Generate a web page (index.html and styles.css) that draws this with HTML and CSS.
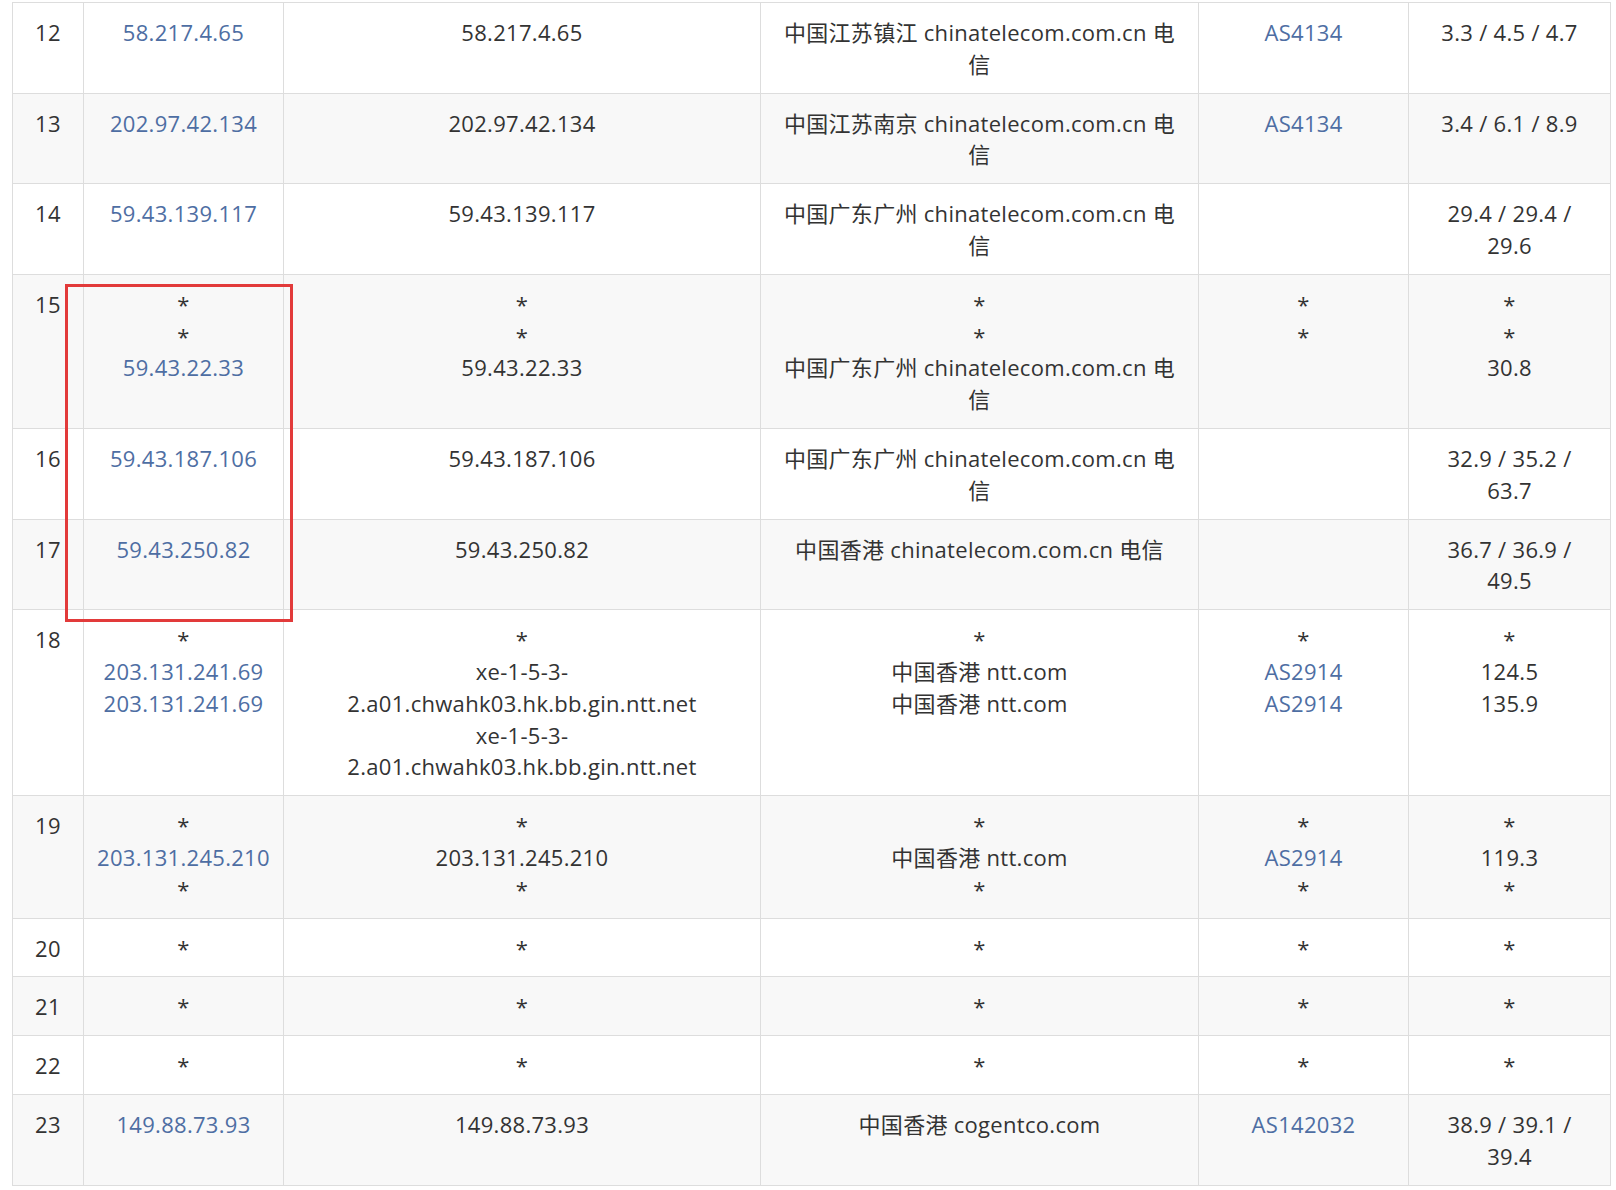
FILE: index.html
```html
<!DOCTYPE html>
<html lang="zh-CN">
<head>
<meta charset="utf-8">
<title>Traceroute</title>
<link rel="stylesheet" href="styles.css">
</head>
<body>
<div class="wrap">
<table class="trace">
<colgroup>
<col class="c-hop"><col class="c-ip"><col class="c-host"><col class="c-loc"><col class="c-asn"><col class="c-rtt">
</colgroup>
<tbody>
<tr><td>12</td><td><a>58.217.4.65</a></td><td class="host">58.217.4.65</td><td class="loc">中国江苏镇江 chinatelecom.com.cn 电信</td><td><a>AS4134</a></td><td class="rtt">3.3 / 4.5 / 4.7</td></tr>
<tr><td>13</td><td><a>202.97.42.134</a></td><td class="host">202.97.42.134</td><td class="loc">中国江苏南京 chinatelecom.com.cn 电信</td><td><a>AS4134</a></td><td class="rtt">3.4 / 6.1 / 8.9</td></tr>
<tr><td>14</td><td><a>59.43.139.117</a></td><td class="host">59.43.139.117</td><td class="loc">中国广东广州 chinatelecom.com.cn 电信</td><td></td><td class="rtt">29.4 / 29.4 / 29.6</td></tr>
<tr><td>15</td><td><div>*</div><div>*</div><div><a>59.43.22.33</a></div></td><td class="host"><div>*</div><div>*</div><div>59.43.22.33</div></td><td class="loc"><div>*</div><div>*</div><div>中国广东广州 chinatelecom.com.cn 电信</div></td><td><div>*</div><div>*</div></td><td class="rtt"><div>*</div><div>*</div><div>30.8</div></td></tr>
<tr><td>16</td><td><a>59.43.187.106</a></td><td class="host">59.43.187.106</td><td class="loc">中国广东广州 chinatelecom.com.cn 电信</td><td></td><td class="rtt">32.9 / 35.2 / 63.7</td></tr>
<tr><td>17</td><td><a>59.43.250.82</a></td><td class="host">59.43.250.82</td><td class="loc">中国香港 chinatelecom.com.cn 电信</td><td></td><td class="rtt">36.7 / 36.9 / 49.5</td></tr>
<tr><td>18</td><td><div>*</div><div><a>203.131.241.69</a></div><div><a>203.131.241.69</a></div></td><td class="host"><div>*</div><div>xe-1-5-3-2.a01.chwahk03.hk.bb.gin.ntt.net</div><div>xe-1-5-3-2.a01.chwahk03.hk.bb.gin.ntt.net</div></td><td class="loc"><div>*</div><div>中国香港 ntt.com</div><div>中国香港 ntt.com</div></td><td><div>*</div><div><a>AS2914</a></div><div><a>AS2914</a></div></td><td class="rtt"><div>*</div><div>124.5</div><div>135.9</div></td></tr>
<tr><td>19</td><td><div>*</div><div><a>203.131.245.210</a></div><div>*</div></td><td class="host"><div>*</div><div>203.131.245.210</div><div>*</div></td><td class="loc"><div>*</div><div>中国香港 ntt.com</div><div>*</div></td><td><div>*</div><div><a>AS2914</a></div><div>*</div></td><td class="rtt"><div>*</div><div>119.3</div><div>*</div></td></tr>
<tr><td>20</td><td>*</td><td class="host">*</td><td class="loc">*</td><td>*</td><td class="rtt">*</td></tr>
<tr><td>21</td><td>*</td><td class="host">*</td><td class="loc">*</td><td>*</td><td class="rtt">*</td></tr>
<tr><td>22</td><td>*</td><td class="host">*</td><td class="loc">*</td><td>*</td><td class="rtt">*</td></tr>
<tr><td>23</td><td><a>149.88.73.93</a></td><td class="host">149.88.73.93</td><td class="loc">中国香港 cogentco.com</td><td><a>AS142032</a></td><td class="rtt">38.9 / 39.1 / 39.4</td></tr>
</tbody>
</table>
<div class="mark"></div>
</div>
</body>
</html>
```

FILE: styles.css
```css
html, body {
  margin: 0;
  padding: 0;
  background: #ffffff;
}

body {
  font-family: "Open Sans", "Noto Sans CJK SC", sans-serif;
  font-size: 22px;
  letter-spacing: 0.3px;
  color: #333333;
}

.wrap {
  position: relative;
  padding: 2px 0 0 12px;
}

.trace {
  border-collapse: collapse;
  table-layout: fixed;
  width: 1599px;
}

.c-hop { width: 71px; }
.c-ip { width: 200px; }
.c-host { width: 477px; }
.c-loc { width: 438px; }
.c-asn { width: 210px; }
.c-rtt { width: 202px; }

.trace td {
  border: 1px solid #dddddd;
  padding: 14px 10px 12px;
  line-height: 31.8px;
  text-align: center;
  vertical-align: top;
}

.trace td.host {
  padding-left: 24px;
  padding-right: 24px;
}

.trace td.loc {
  padding-left: 20px;
  padding-right: 20px;
}

.trace td.rtt {
  padding-left: 20px;
  padding-right: 20px;
}

.trace tr:nth-child(even) td {
  background: #f8f8f8;
}

.trace a {
  color: #4e6ea3;
  text-decoration: none;
}

.mark {
  position: absolute;
  left: 65px;
  top: 284px;
  width: 222px;
  height: 332px;
  border: 3px solid #e23a3a;
}
```
